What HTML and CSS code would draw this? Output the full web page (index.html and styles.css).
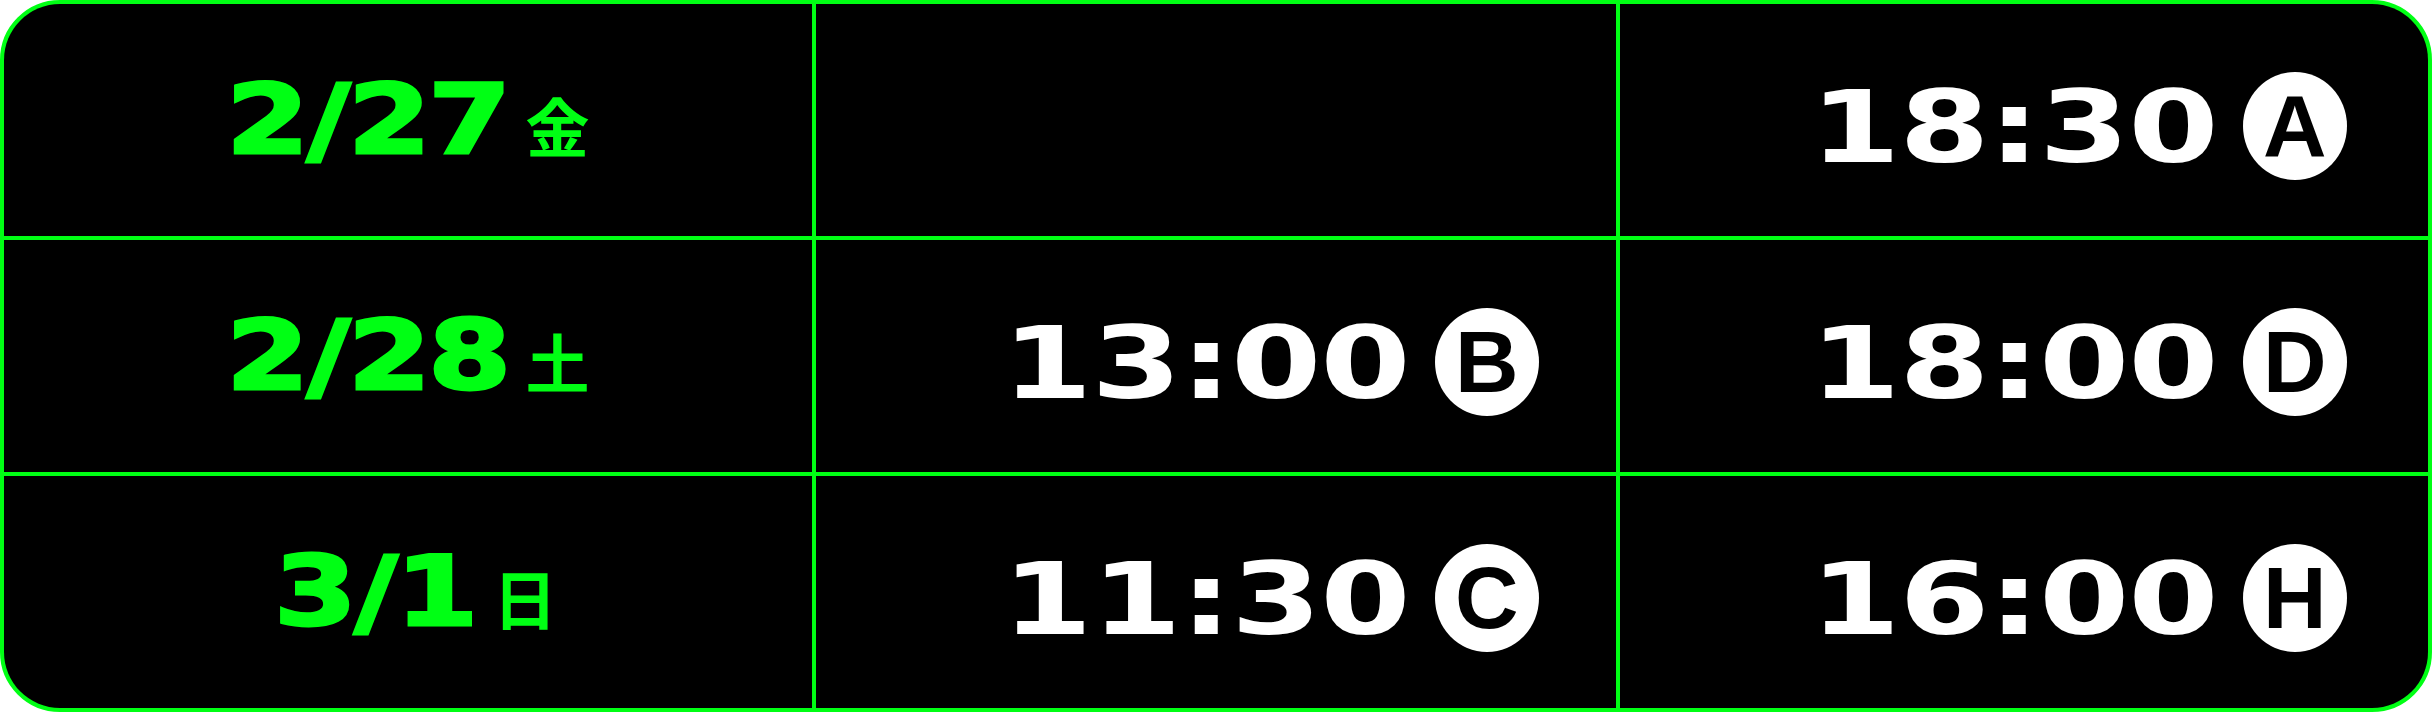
FILE: index.html
```html
<!DOCTYPE html>
<html lang="ja">
<head>
<meta charset="utf-8">
<title>Schedule</title>
<link rel="stylesheet" href="styles.css">
</head>
<body>
<div class="schedule">
  <div class="cell date"><span class="num">2/27</span><span class="dow">金</span></div>
  <div class="cell time"></div>
  <div class="cell time"><span class="clock">18:30</span><span class="badge">A</span></div>

  <div class="cell date"><span class="num">2/28</span><span class="dow">土</span></div>
  <div class="cell time"><span class="clock">13:00</span><span class="badge">B</span></div>
  <div class="cell time"><span class="clock">18:00</span><span class="badge">D</span></div>

  <div class="cell date"><span class="num">3/1</span><span class="dow">日</span></div>
  <div class="cell time"><span class="clock">11:30</span><span class="badge">C</span></div>
  <div class="cell time"><span class="clock">16:00</span><span class="badge">H</span></div>
</div>
</body>
</html>
```

FILE: styles.css
```css
html, body {
  margin: 0;
  padding: 0;
  background: #ffffff;
}

.schedule {
  box-sizing: border-box;
  width: 2432px;
  height: 712px;
  border: 4px solid #00ff14;
  border-radius: 60px;
  background: #00ff14;
  overflow: hidden;
  display: grid;
  grid-template-columns: 808px 800px 808px;
  grid-template-rows: repeat(3, 1fr);
  gap: 4px;
}

.cell {
  background: #000000;
  display: flex;
  align-items: center;
  justify-content: center;
}

.date {
  padding-left: 54px;
}

.num {
  display: inline-block;
  font-family: "DejaVu Sans", sans-serif;
  font-weight: 700;
  font-size: 96px;
  line-height: 1;
  letter-spacing: -0.02em;
  color: #00ff14;
  -webkit-text-stroke: 3px #00ff14;
  transform: scaleX(1.24);
  transform-origin: right center;
}

.dow {
  display: inline-block;
  margin-left: 17px;
  font-family: "Noto Sans CJK JP", sans-serif;
  font-weight: 700;
  font-size: 64px;
  line-height: 1;
  color: #00ff14;
  position: relative;
  top: 4px;
}

.time {
  padding-left: 203px;
}

.clock {
  display: inline-block;
  font-family: "DejaVu Sans", sans-serif;
  font-weight: 700;
  font-size: 100px;
  line-height: 1;
  letter-spacing: -0.01em;
  color: #ffffff;
  transform: scaleX(1.3);
  transform-origin: right center;
  position: relative;
  top: 8px;
}

.badge {
  display: flex;
  align-items: center;
  justify-content: center;
  width: 104px;
  height: 108px;
  margin-left: 25px;
  border-radius: 50%;
  background: #ffffff;
  color: #000000;
  font-family: "Liberation Sans Narrow", "Liberation Sans", sans-serif;
  font-weight: 700;
  font-size: 88px;
  line-height: 1;
  position: relative;
  top: 6px;
}
```
